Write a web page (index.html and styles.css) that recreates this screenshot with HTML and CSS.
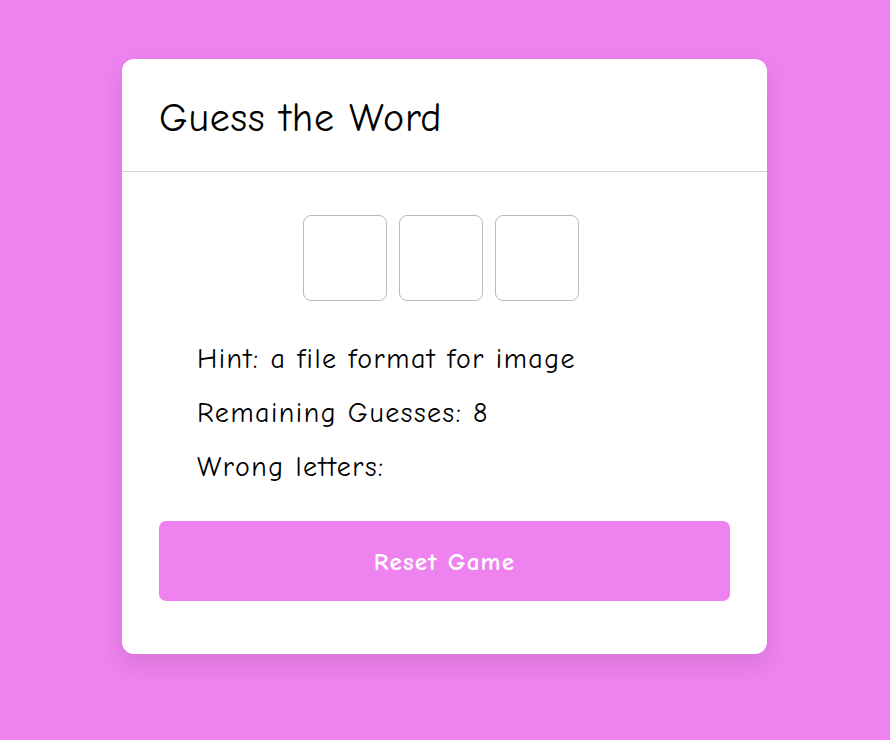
FILE: index.html
```html
<!DOCTYPE html>
<html lang="en">
<head>
<meta charset="utf-8">
<title>Guess the Word</title>
<link rel="stylesheet" href="styles.css">
</head>
<body>
<main class="page">
  <section class="card">
    <header class="card-header">
      <h1 class="title">Guess the Word</h1>
    </header>
    <div class="card-body">
      <div class="letters">
        <span class="letter"></span>
        <span class="letter"></span>
        <span class="letter"></span>
      </div>
      <ul class="info">
        <li>Hint: a file format for image</li>
        <li>Remaining Guesses: 8</li>
        <li>Wrong letters:</li>
      </ul>
      <button class="reset" type="button">Reset Game</button>
    </div>
  </section>
</main>
</body>
</html>
```
FILE: styles.css
```css
* { box-sizing: border-box; }
html, body { margin: 0; padding: 0; }
body {
  background: #ee82ee;
  font-family: "Comic Sans MS", "Comic Neue", "Chalkboard SE", cursive;
  color: #000;
  min-height: 740px;
}
.page {
  display: flex;
  justify-content: center;
  padding-top: 59px;
  padding-right: 1px;
}
.card {
  width: 645px;
  background: #fff;
  border-radius: 12px;
  box-shadow: 0 10px 25px rgba(0, 0, 0, 0.1);
  padding-bottom: 53px;
}
.card-header {
  height: 113px;
  padding: 6px 37px 0 37px;
  display: flex;
  align-items: center;
  border-bottom: 1px solid #d6d6d6;
}
.title {
  margin: 0;
  font-size: 40px;
  font-weight: normal;
  line-height: 1;
  letter-spacing: 0.8px;
}
.card-body {
  padding: 43px 37px 0 37px;
}
.letters {
  display: flex;
  justify-content: center;
  gap: 12px;
  padding-right: 8px;
}
.letter {
  width: 84px;
  height: 86px;
  border: 1px solid #b9b9b9;
  border-radius: 8px;
}
.info {
  list-style: none;
  margin: 40px 0 0 0;
  padding: 0 0 0 38px;
  display: flex;
  flex-direction: column;
  gap: 18px;
}
.info li {
  font-size: 28px;
  line-height: 36px;
  letter-spacing: 1.5px;
}
.reset {
  display: block;
  width: 100%;
  height: 80px;
  margin-top: 36px;
  border: none;
  border-radius: 7px;
  background: #ee82ee;
  color: #fff;
  font-family: inherit;
  font-size: 25px;
  font-weight: bold;
  letter-spacing: 1.2px;
}
```
